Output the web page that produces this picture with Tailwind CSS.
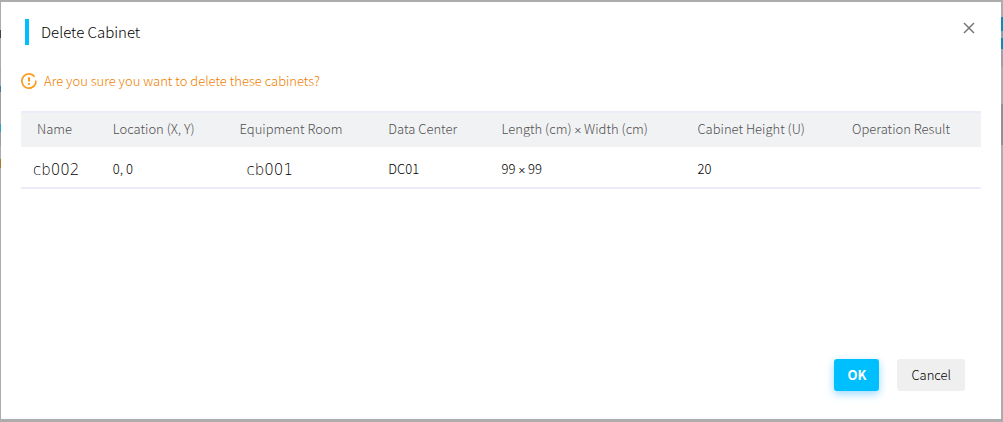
<!DOCTYPE html>
<html lang="en">
<head>
<meta charset="utf-8">
<meta name="viewport" content="width=device-width, initial-scale=1">
<title>Delete Cabinet</title>
<script src="https://cdn.jsdelivr.net/npm/@tailwindcss/browser@4"></script>
</head>
<body class="font-['Noto_Sans_CJK_SC','Open_Sans',sans-serif] text-[13px] font-light text-[#333]">
<div class="flex min-h-screen bg-[#acacac] pt-[2px] pb-[3px]">
  <!-- slivers of the dimmed page on both sides of the dialog -->
  <div class="w-px shrink-0 bg-[linear-gradient(#acacac_0_28px,#444_28px_36px,#acacac_36px_66px,#a5a5af_66px_84px,#4a7897_84px_90px,#9fa0a6_90px_122px,#2f9cc0_122px_130px,#9b9ca4_130px_144px,#acacac_144px_157px,#a87a2c_157px_166px,#acacac_166px)]"></div>
  <main role="dialog" aria-labelledby="title" class="flex grow flex-col bg-white pr-5 pl-5">
    <header class="flex items-start justify-between pt-[17px]">
      <h1 id="title" class="ml-1 h-[26px] border-l-4 border-[#00bfff] pl-3 text-[15px] leading-[25px] font-light text-black">Delete Cabinet</h1>
      <button type="button" aria-label="Close" class="mr-[6px] flex size-3 items-center justify-center mt-[3px]">
        <svg class="size-3" viewBox="0 0 12 12" fill="none" stroke="#777" stroke-width="1.5"><path d="M1 1l10 10M11 1L1 11"/></svg>
      </button>
    </header>
    <p class="mt-[26px] flex items-center gap-[7px] leading-5 text-[#f08000]">
      <svg class="size-4" viewBox="0 0 16 16" fill="none" stroke="#fa9d1c" stroke-width="1.7"><path d="M13.6 3.7A7.1 7.1 0 1 0 14.7 10.2V7.4"/><path d="M8 4.2v4.4M8 10v1.8" stroke-width="2"/></svg>
      Are you sure you want to delete these cabinets?
    </p>
    <table class="mt-5 w-full table-fixed border-collapse text-left">
      <thead class="border-t-2 border-[#ebebfa] bg-[#f1f2f4] text-[#505050]">
        <tr class="h-[35px]">
          <th class="w-[7.9%] pb-[2px] pl-4 font-light">Name</th>
          <th class="w-[13.2%] pb-[2px] pl-4 font-light">Location (X, Y)</th>
          <th class="w-[15.5%] pb-[2px] pl-4 font-light">Equipment Room</th>
          <th class="w-[11.8%] pb-[2px] pl-4 font-light">Data Center</th>
          <th class="w-[20.4%] pb-[2px] pl-4 font-light">Length (cm) <span class="font-['Roboto']">×</span> Width (cm)</th>
          <th class="w-[16.1%] pb-[2px] pl-4 font-light">Cabinet Height (U)</th>
          <th class="w-[15.1%] pb-[2px] pl-4 font-light">Operation Result</th>
        </tr>
      </thead>
      <tbody>
        <tr class="h-[41px] border-b-2 border-[#ebebfa] text-black">
          <td class="pt-[6px] pl-3 font-['DejaVu_Sans',sans-serif] text-[15px] font-extralight">cb002</td>
          <td class="pt-1 pl-4">0, 0</td>
          <td class="pt-[6px] pl-[23px] font-['DejaVu_Sans',sans-serif] text-[15px] font-extralight">cb001</td>
          <td class="pt-1 pl-4">DC01</td>
          <td class="pt-1 pl-4">99 <span class="font-['Roboto']">×</span> 99</td>
          <td class="pt-1 pl-4">20</td>
          <td class="pt-1 pl-4"></td>
        </tr>
      </tbody>
    </table>
    <footer class="mt-auto mr-4 mb-7 flex justify-end gap-[18px]">
      <button type="button" class="h-8 rounded-[3px] bg-[#00bfff] px-[13px] font-bold text-white shadow-[0_3px_8px_#00a0ff66]">OK</button>
      <button type="button" class="h-8 rounded-[3px] bg-[#efefef] px-[14px] text-black">Cancel</button>
    </footer>
  </main>
  <div class="w-[2px] shrink-0 bg-[linear-gradient(#acacac_0_15px,#078dbc_15px_29px,#7fa5b5_29px_36px,#078dbc_36px_47px,#a0a0a8_47px_65px,#acacac_65px_102px,#8d9296_102px_143px,#acacac_143px)]"></div>
</div>
</body>
</html>
